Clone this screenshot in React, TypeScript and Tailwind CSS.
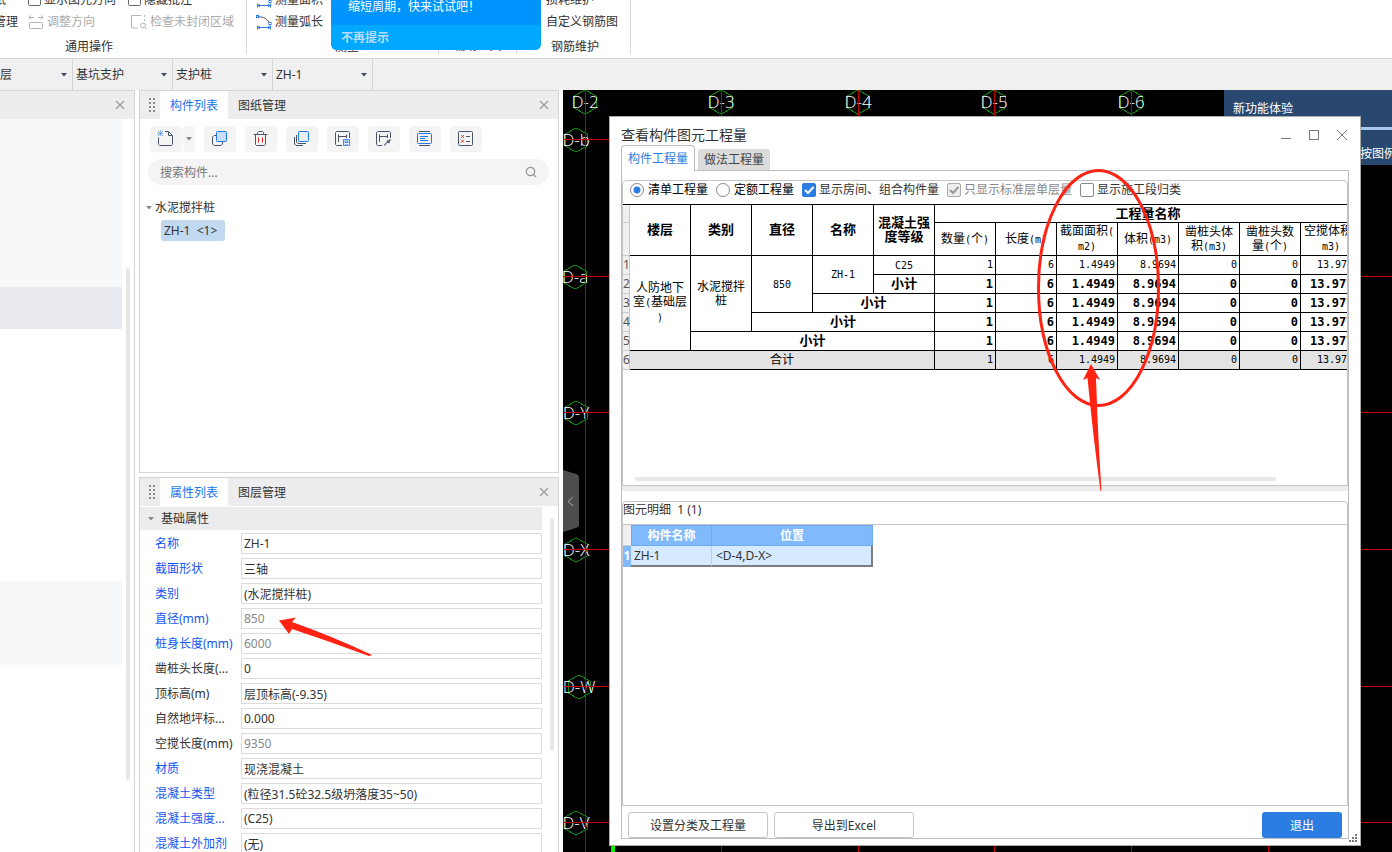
import React from "react";

const NAMES = "font-['Noto_Sans','Noto_Sans_CJK_SC',sans-serif]";

/* ---------- small shared pieces ---------- */

function CloseIcon({ className = "" }: { className?: string }) {
  return (
    <svg className={className} width="10" height="10" viewBox="0 0 10 10" fill="none" stroke="currentColor" strokeWidth="1.2">
      <path d="M1 1l8 8M9 1l-8 8" />
    </svg>
  );
}

function Caret({ className = "" }: { className?: string }) {
  return (
    <svg className={className} width="6" height="4" viewBox="0 0 6 4">
      <path d="M0 0h6L3 3.500z" fill="currentColor" />
    </svg>
  );
}

function Grip() {
  return (
    <svg width="7" height="15" viewBox="0 0 7 15" fill="#8a8a8a">
      {[0, 4, 8, 12].map((y) => (
        <g key={y}>
          <rect x="0" y={y} width="2" height="2" />
          <rect x="4" y={y} width="2" height="2" />
        </g>
      ))}
    </svg>
  );
}

function PanelHeader({ active, other }: { active: string; other: string }) {
  return (
    <div className="flex h-7 shrink-0 items-stretch bg-[#ededf0]">
      <span className="flex w-5 items-center justify-center pl-1">
        <Grip />
      </span>
      <button type="button" className="w-17 bg-white pt-px text-[#1a73e8]">{active}</button>
      <button type="button" className="w-17 pt-px">{other}</button>
      <button type="button" aria-label="关闭" className="mr-2 ml-auto flex w-3 items-center justify-center text-[#999]">
        <CloseIcon />
      </button>
    </div>
  );
}

/* ---------- ribbon ---------- */

function RibbonIcon({ kind }: { kind: "box" | "adjust" | "region" | "area" | "arc" }) {
  if (kind === "box")
    return (
      <svg width="13" height="16" viewBox="0 0 13 16" fill="none" stroke="#666">
        <rect x="0.500" y="3.500" width="12" height="10" rx="1" />
      </svg>
    );
  if (kind === "adjust")
    return (
      <svg width="16" height="16" viewBox="0 0 16 16" fill="none" stroke="#b4b4b4">
        <path d="M1 3.5h5M3 1.5l-2 2 2 2M10 3.5h5M13 1.5l2 2-2 2" />
        <rect x="1.5" y="8.5" width="13" height="6" rx="1" />
      </svg>
    );
  if (kind === "region")
    return (
      <svg width="16" height="16" viewBox="0 0 16 16" fill="none" stroke="#b4b4b4">
        <path d="M10 1.5H0.500v12.500h6" />
        <path d="M13.500 1v2M13.500 5v2" />
        <circle cx="12" cy="11.500" r="2.500" />
        <path d="M14 13.500l2 2" />
      </svg>
    );
  return (
    <svg width="16" height="16" viewBox="0 0 16 16" fill="none" stroke="#2f7be0">
      {kind === "arc" ? <path d="M2 3c6-1 10 3 12 7" stroke="#555" /> : <path d="M2 2h12v8" stroke="#555" />}
      <rect x="0.500" y="1.500" width="2" height="2" fill="#fff" />
      <rect x="13" y="8.500" width="2" height="2" fill="#fff" />
      <path d="M1 13.500h14M1.500 11.500v4M14.500 11.500v4M4 12l-2 1.500 2 1.500M12 12l2 1.500-2 1.500" />
    </svg>
  );
}

function RibbonItem({ icon, label, muted }: { icon?: "box" | "adjust" | "region" | "area" | "arc"; label: string; muted?: boolean }) {
  return (
    <button type="button" disabled={muted} className="flex h-[22px] items-center gap-[3px] whitespace-nowrap disabled:text-[#aaa]">
      {icon && <RibbonIcon kind={icon} />}
      {label}
    </button>
  );
}

function Ribbon() {
  return (
    <div className="relative flex h-[58px] shrink-0 items-end overflow-hidden bg-white">
      <div className="flex w-[246px] shrink-0 flex-col">
        <div className="flex">
          <div className="flex w-7 shrink-0 flex-col items-end pr-[10px]">
            <div className="pr-3">
              <RibbonItem label="图纸" />
            </div>
            <RibbonItem label="管理" />
          </div>
          <div className="w-[100px] shrink-0">
            <RibbonItem icon="box" label="显示图元方向" />
            <RibbonItem icon="adjust" label="调整方向" muted />
          </div>
          <div>
            <RibbonItem icon="box" label="隐藏批注" />
            <div className="pl-[3px]">
              <RibbonItem icon="region" label="检查未封闭区域" muted />
            </div>
          </div>
        </div>
        <div className="flex h-[25px] items-center pt-[2px] pl-[65px]">通用操作</div>
      </div>
      <div className="mb-1 flex w-[192px] shrink-0 flex-col border-l border-[#d8d8d8] pl-[9px]">
        <RibbonItem icon="area" label="测量面积" />
        <RibbonItem icon="arc" label="测量弧长" />
        <div className="flex h-[21px] items-center justify-center pt-[6px]">测量</div>
      </div>
      <div className="mb-1 flex h-[65px] w-[79px] shrink-0 items-end justify-center border-x border-[#d8d8d8]">辅助工具</div>
      <div className="mb-1 flex w-[114px] shrink-0 flex-col border-r border-[#d8d8d8] pl-[29px]">
        <RibbonItem label="损耗维护" />
        <RibbonItem label="自定义钢筋图" />
        <div className="flex h-[21px] items-center pt-[6px] pl-[5px]">钢筋维护</div>
      </div>
      <div className="absolute top-0 left-[331px] flex h-[50px] w-[210px] flex-col overflow-hidden rounded-b-md bg-[#0094ff] text-white">
        <p className="h-[25px] pl-[17px] text-[12px] leading-[14px]">缩短周期，快来试试吧！</p>
        <button type="button" className="flex-1 bg-[#00a8ff] pl-[10px] text-left font-bold text-[#b5dcff]">不再提示</button>
      </div>
    </div>
  );
}

function SelectorBar() {
  const items = ["基坑支护", "支护桩", "ZH-1"];
  return (
    <div className="flex h-8 shrink-0 items-stretch border-t border-[#d4d4d4] bg-[#f0f0f0]">
      <button type="button" className="flex w-[73px] items-center justify-between border-r border-[#d4d4d4] pr-[5px]">
        层<Caret className="text-[#444b60]" />
      </button>
      {items.map((t) => (
        <button key={t} type="button" className="flex w-[100px] items-center justify-between border-r border-[#d4d4d4] pr-[5px] pl-[3px]">
          {t}
          <Caret className="text-[#444b60]" />
        </button>
      ))}
    </div>
  );
}

/* ---------- left column ---------- */

function SidePanel() {
  return (
    <div className="flex w-[135px] shrink-0 flex-col border-t border-r border-[#d4d4d4] bg-white">
      <div className="flex h-7 items-center justify-end bg-[#ededf0] pr-[9px]">
        <button type="button" aria-label="关闭" className="text-[#999]">
          <CloseIcon />
        </button>
      </div>
      <div className="flex flex-1">
        <div className="w-[122px]">
          <div className="h-[168px] bg-[#f7f8fa]" />
          <div className="h-[42px] bg-[#e8eaef]" />
          <div className="h-[252px]" />
          <div className="h-[84px] bg-[#f7f8fa]" />
        </div>
        <div className="mt-[149px] ml-1 h-[512px] w-1 rounded-full bg-[#e6e6e6]" />
      </div>
    </div>
  );
}

/* ---------- component list ---------- */

const TOOL_ICONS: { name: string; art: React.ReactNode }[] = [
  {
    name: "复制",
    art: (
      <>
        <path d="M5 5.500H3L1.500 7v7L3 15.500h7l1.500-1.500v-2" stroke="#4a5468" />
        <rect x="5.500" y="1.500" width="10" height="10" rx="1" fill="#c9dcf7" stroke="#2176e5" />
      </>
    ),
  },
  {
    name: "删除",
    art: (
      <>
        <path d="M1.500 4.500h14M3.500 4.500v10l1 1h8l1-1v-10M5.500 4.500v-2l1-1h4l1 1v2" stroke="#4a5468" />
        <path d="M6.500 7.500v5M10.500 7.500v5" stroke="#e02020" />
      </>
    ),
  },
  {
    name: "层间复制",
    art: (
      <>
        <path d="M3.500 5v7l1.500 1.500h8M1.500 7v7L3 15.500h7" stroke="#4a5468" />
        <rect x="5.500" y="1.500" width="10" height="10" rx="1" fill="#e6f0fe" stroke="#2176e5" />
      </>
    ),
  },
  {
    name: "存档",
    art: (
      <>
        <path d="M8 15.500H2.500l-1-1v-12l1-1h12l1 1V8M4.500 12V4.500M4.500 6.500h8M12.500 4.500V8" stroke="#4a5468" />
        <path d="M9.500 9.500h6v6h-6z" fill="#dcebff" stroke="#4b8be6" />
        <path d="M11 11h3v1.500h-3zM11 15h3" stroke="#4b8be6" fill="#fff" />
      </>
    ),
  },
  {
    name: "提取",
    art: (
      <>
        <path d="M7 15.500H2.500l-1-1v-12l1-1h12l1 1V8M4.500 12V4.500M4.500 6.500h8M12.500 4.500V8" stroke="#4a5468" />
        <path d="M9 15.500l4-4" stroke="#7b8394" strokeWidth="1.500" />
        <path d="M12 10.500l2.500 2.500M13.500 11.500l2-2" stroke="#4a5468" strokeWidth="1.500" />
      </>
    ),
  },
  {
    name: "列表",
    art: (
      <>
        <path d="M3 1.500h11M3 15.500h11" stroke="#4a5468" />
        <rect x="1.500" y="3.500" width="14" height="10" rx="1" stroke="#2176e5" />
        <path d="M4 6.500h8M4 8.500h5M4 10.500h8" stroke="#2176e5" />
      </>
    ),
  },
  {
    name: "批量选择",
    art: (
      <>
        <rect x="1.500" y="1.500" width="14" height="14" rx="1" stroke="#4a5468" />
        <path d="M4 5l3 3M7 5L4 8M4 9.500l3 3M7 9.500l-3 3" stroke="#e04040" />
        <path d="M9 6.500h4M9 11.500h4" stroke="#4a5468" />
      </>
    ),
  },
];

function ToolIcon({ children }: { children: React.ReactNode }) {
  return (
    <svg className="overflow-visible" width="16" height="16" viewBox="1 1 16 16" fill="none">
      {children}
    </svg>
  );
}

function ComponentList() {
  return (
    <section className="flex h-[383px] shrink-0 flex-col border border-[#d4d4d4] bg-white">
      <PanelHeader active="构件列表" other="图纸管理" />
      <div className="flex gap-[9px] px-[10px] pt-[7px]">
        <div className="flex gap-px">
          <button type="button" aria-label="新建" className="flex h-[26px] w-8 items-center justify-center rounded-sm bg-[#f4f4f4]">
            <ToolIcon>
              <path d="M1.500 7.500v7l1 1h12l1-1v-9l-4-4H8" stroke="#4a5468" />
              <path d="M11.500 2v3.500H15" stroke="#4a5468" />
              <path d="M1 1l5 5M6 1L1 6M3.500 0.500v6M0.500 3.500h6" stroke="#2f7be0" strokeDasharray="1 1" />
            </ToolIcon>
          </button>
          <button type="button" aria-label="更多新建选项" className="flex h-[26px] w-3 items-center justify-center rounded-sm bg-[#f4f4f4] text-[#888]">
            <Caret />
          </button>
        </div>
        {TOOL_ICONS.map((t) => (
          <button key={t.name} type="button" aria-label={t.name} className="flex h-[26px] w-8 items-center justify-center rounded-sm bg-[#f4f4f4]">
            <ToolIcon>{t.art}</ToolIcon>
          </button>
        ))}
      </div>
      <label className="mr-[9px] ml-2 mt-[7px] flex h-[26px] items-center rounded-full bg-[#f4f4f4] pr-3 pl-3">
        <input aria-label="搜索构件" placeholder="搜索构件..." className="min-w-0 flex-1 bg-transparent pt-px outline-none placeholder:text-[#777]" />
        <svg width="12" height="12" viewBox="0 0 12 12" fill="none" stroke="#999" strokeWidth="1.200">
          <circle cx="5.500" cy="5.500" r="4.200" />
          <path d="M8.500 8.500l2.500 2.500" />
        </svg>
      </label>
      <div className="mt-[13px] ml-[6px] flex h-5 items-center gap-[3px]">
        <Caret className="text-[#888]" />
        水泥搅拌桩
      </div>
      <button type="button" className="mt-[2px] ml-[21px] h-[21px] w-16 self-start rounded-[3px] bg-[#c1d8f1] px-[3px] text-left">
        ZH-1&nbsp; &lt;1&gt;
      </button>
    </section>
  );
}

/* ---------- properties ---------- */

const PROPS: { label: string; value: string; blue?: boolean; muted?: boolean }[] = [
  { label: "名称", value: "ZH-1", blue: true },
  { label: "截面形状", value: "三轴", blue: true },
  { label: "类别", value: "(水泥搅拌桩)", blue: true },
  { label: "直径(mm)", value: "850", blue: true, muted: true },
  { label: "桩身长度(mm)", value: "6000", blue: true, muted: true },
  { label: "凿桩头长度(...", value: "0" },
  { label: "顶标高(m)", value: "层顶标高(-9.35)" },
  { label: "自然地坪标...", value: "0.000" },
  { label: "空搅长度(mm)", value: "9350", muted: true },
  { label: "材质", value: "现浇混凝土", blue: true },
  { label: "混凝土类型", value: "(粒径31.5砼32.5级坍落度35~50)", blue: true },
  { label: "混凝土强度...", value: "(C25)", blue: true },
  { label: "混凝土外加剂", value: "(无)", blue: true },
];

function PropertyList() {
  return (
    <section className="mt-1 flex min-h-0 flex-1 flex-col overflow-hidden border border-b-0 border-[#d4d4d4] bg-white">
      <PanelHeader active="属性列表" other="图层管理" />
      <div className="flex min-h-0 flex-1">
        <div className="flex-1 pt-px">
          <div className="flex h-[23px] items-center gap-[7px] bg-[#ececec] pl-2">
            <Caret className="text-[#888]" />
            基础属性
          </div>
          <div className="flex flex-col gap-1 pt-[3px]">
            {PROPS.map((p, i) => (
              <div key={p.label} className="flex h-[21px] items-center pl-[15px]">
                <label htmlFor={`prop-${i}`} className={`w-[86px] shrink-0 whitespace-nowrap ${p.blue ? "text-[#1456f0]" : ""}`}>
                  {p.label}
                </label>
                <input
                  id={`prop-${i}`}
                  defaultValue={p.value}
                  className={`h-[21px] min-w-0 flex-1 border border-[#dcdcdc] px-[2px] outline-none ${p.muted ? "text-[#888]" : ""}`}
                />
              </div>
            ))}
          </div>
        </div>
        <div className="mt-3 mr-1 ml-2 h-[233px] w-1 rounded-full bg-[#e8e8e8]" />
      </div>
    </section>
  );
}

/* ---------- drawing canvas ---------- */

const V_AXES = [
  { x: 22, t: "D-2" },
  { x: 158, t: "D-3" },
  { x: 295, t: "D-4" },
  { x: 431, t: "D-5" },
  { x: 568, t: "D-6" },
  { x: 705, t: "" },
];
const H_AXES = [
  { x: 13, y: 49, t: "D-b" },
  { x: 12, y: 186, t: "D-a" },
  { x: 13, y: 322, t: "D-Y" },
  { x: 13, y: 459, t: "D-X" },
  { x: 16, y: 596, t: "D-W" },
  { x: 13, y: 732, t: "D-V" },
];

function AxisMark({ x, y, t }: { x: number; y: number; t: string }) {
  return (
    <g>
      <path d={`M${x} ${y - 12}l11 6v12l-11 6-11-6v-12z`} fill="none" stroke="#0a8a0a" />
      <text x={x} y={y + 6} textAnchor="middle" fill="#fff" fontSize="17">
        {t}
      </text>
    </g>
  );
}

function Drawing() {
  return (
    <svg className="absolute inset-0 h-full w-full font-['Open_Sans','Noto_Sans',sans-serif] font-light" shapeRendering="crispEdges">
      {V_AXES.filter((a) => a.t).map((a) => (
        <AxisMark key={a.t} x={a.x} y={12} t={a.t} />
      ))}
      {H_AXES.map((a) => (
        <AxisMark key={a.t} x={a.x} y={a.y + 1} t={a.t} />
      ))}
      {V_AXES.map((a) => (
        <line key={a.x} x1={a.x + 0.5} x2={a.x + 0.5} y1="0" y2="100%" stroke="#c80000" />
      ))}
      {H_AXES.map((a) => (
        <line key={a.y} x1="0" x2="100%" y1={a.y + 0.5} y2={a.y + 0.5} stroke="#c80000" />
      ))}
      <rect x="48" y="740" width="4" height="40" fill="#00f000" />
    </svg>
  );
}

/* ---------- quantity table ---------- */

/* Latin runs are set in a narrower monospace size than the Chinese glyphs. */
function Mixed({ text }: { text: string }) {
  return (
    <>
      {text.split(/([ -~]+)/).map((part, i) =>
        /^[ -~]+$/.test(part) ? (
          <span key={i} className="text-[10px]">{part}</span>
        ) : (
          part
        ),
      )}
    </>
  );
}

const CELL = "overflow-hidden border-r border-b border-black p-0 whitespace-pre";
const GUTTER = "border-r border-b border-[#c8c8c8] bg-[#f0f0f0] p-0 font-normal";
const HEAD = `${CELL} text-center text-[13px] leading-[14px] font-bold`;
const SUB = `${CELL} text-center leading-[14px] font-normal`;
const MID = `${CELL} text-center leading-[14px]`;
const VALUES = ["1", "6", "1.4949", "8.9694", "0", "0"];
const QTY_HEADS = ["数量(个)", "长度(m)", "截面面积(\nm2)", "体积(m3)", "凿桩头体\n积(m3)", "凿桩头数\n量(个)", "空搅体积(\nm3)"];

function Values({ bold }: { bold?: boolean }) {
  return (
    <>
      {VALUES.map((v, i) => (
        <td key={i} className={`${CELL} pr-[2px] text-right ${bold ? "text-[12px] font-bold" : "text-[10px]"}`}>
          {v}
        </td>
      ))}
      <td className={`${CELL} text-left ${bold ? "pl-[9px] text-[12px] font-bold" : "pl-4 text-[10px]"}`}>13.9777</td>
    </>
  );
}

function RowNo({ n }: { n: number }) {
  return (
    <th scope="row" className={`${GUTTER} ${NAMES} text-[12px] text-[#555]`}>
      {n}
    </th>
  );
}

function QuantityTable() {
  return (
    <table className="w-[739px] table-fixed border-separate border-spacing-0 border-t border-black font-['DejaVu_Sans_Mono','Noto_Sans_CJK_SC',monospace] text-[12px] leading-[14px] text-black">
      <colgroup>
        <col className="w-[7px]" />
        {Array.from({ length: 12 }, (_, i) => (
          <col key={i} className="w-[61px]" />
        ))}
      </colgroup>
      <thead>
        <tr className="h-[18px]">
          <td className={GUTTER} />
          <th rowSpan={2} className={HEAD}>楼层</th>
          <th rowSpan={2} className={HEAD}>类别</th>
          <th rowSpan={2} className={HEAD}>直径</th>
          <th rowSpan={2} className={HEAD}>名称</th>
          <th rowSpan={2} className={HEAD}>{"混凝土强\n度等级"}</th>
          <th colSpan={7} className={HEAD}>工程量名称</th>
        </tr>
        <tr className="h-[33px]">
          <td className={GUTTER} />
          {QTY_HEADS.map((h) => (
            <th key={h} className={SUB}>
              <Mixed text={h} />
            </th>
          ))}
        </tr>
      </thead>
      <tbody>
        <tr className="h-[19px]">
          <RowNo n={1} />
          <td rowSpan={5} className={MID}><Mixed text={"人防地下\n室(基础层\n)"} /></td>
          <td rowSpan={4} className={MID}>{"水泥搅拌\n桩"}</td>
          <td rowSpan={3} className={MID}><Mixed text="850" /></td>
          <td rowSpan={2} className={MID}><Mixed text="ZH-1" /></td>
          <td className={MID}><Mixed text="C25" /></td>
          <Values />
        </tr>
        {[1, 2, 3, 4].map((span) => (
          <tr key={span} className="h-[19px]">
            <RowNo n={span + 1} />
            <td colSpan={span} className={HEAD}>小计</td>
            <Values bold />
          </tr>
        ))}
        <tr className="h-[19px] bg-[#e3e3e3]">
          <RowNo n={6} />
          <td colSpan={5} className={MID}>合计</td>
          <Values />
        </tr>
      </tbody>
    </table>
  );
}

function CheckBox({ label, checked, disabled }: { label: string; checked?: boolean; disabled?: boolean }) {
  return (
    <label className={`flex items-center gap-[3px] whitespace-nowrap ${disabled ? "text-[#888]" : ""}`}>
      <span className="relative flex size-[14px]">
        <input
          type="checkbox"
          defaultChecked={checked}
          disabled={disabled}
          className="peer size-[14px] appearance-none rounded-[2px] border border-[#888] bg-white checked:border-[#2b7de1] checked:bg-[#2b7de1] disabled:border-[#aaa] disabled:bg-[#eee]"
        />
        <svg
          className="pointer-events-none absolute inset-0 hidden text-white peer-checked:block peer-disabled:text-[#999]"
          width="14" height="14" viewBox="0 0 14 14" fill="none" stroke="currentColor" strokeWidth="2"
        >
          <path d="M3 7l3 3 5.500-6" />
        </svg>
      </span>
      {label}
    </label>
  );
}

function Radio({ label, checked }: { label: string; checked?: boolean }) {
  return (
    <label className="flex items-center gap-1 whitespace-nowrap text-black">
      <input
        type="radio"
        name="quantity-kind"
        defaultChecked={checked}
        className="size-[14px] appearance-none rounded-full border border-[#888] bg-white checked:bg-[radial-gradient(circle,#2b7de1_3px,#fff_4px)]"
      />
      {label}
    </label>
  );
}

function QuantityDialog() {
  return (
    <div role="dialog" aria-label="查看构件图元工程量" className="absolute top-[26px] right-[31px] bottom-[6px] left-[46px] flex flex-col border border-[#aaa] bg-white px-[11px] pb-[6px]">
      <div className="flex h-7 shrink-0 items-center justify-between pt-2">
        <h1 className="text-[14px] leading-5">查看构件图元工程量</h1>
        <div className="-mr-[7px] flex text-[#777]">
          <button type="button" aria-label="最小化" className="flex h-5 w-7 items-center justify-center">
            <svg width="10" height="10" viewBox="0 0 10 10" stroke="currentColor"><path d="M0 8.500h10" /></svg>
          </button>
          <button type="button" aria-label="最大化" className="flex h-5 w-7 items-center justify-center">
            <svg width="10" height="10" viewBox="0 0 10 10" fill="none" stroke="currentColor"><rect x="0.500" y="0.500" width="9" height="9" /></svg>
          </button>
          <button type="button" aria-label="关闭" className="flex h-5 w-7 items-center justify-center">
            <svg width="12" height="12" viewBox="0 0 12 12" stroke="currentColor"><path d="M1 1l10 10M11 1L1 11" /></svg>
          </button>
        </div>
      </div>
      <div className="flex h-[25px] shrink-0 items-end gap-[3px]">
        <button type="button" className="z-10 -mb-px h-[26px] w-[74px] rounded-t-sm border border-b-0 border-[#bcbcc4] bg-white text-[#2b7de1]">
          构件工程量
        </button>
        <button type="button" className="h-[21px] w-[72px] rounded-t-[3px] bg-[#dcdcdc] text-[#444]">做法工程量</button>
      </div>
      <div className="flex min-h-0 flex-1 flex-col border border-[#bcbcc4] pt-[9px]">
        <div className="flex min-h-0 flex-1 flex-col rounded-t-sm border border-[#c4c4c4]">
          <div className="flex h-[23px] shrink-0 items-center gap-2 pb-[6px] pl-[7px]">
            <Radio label="清单工程量" checked />
            <Radio label="定额工程量" />
            <CheckBox label="显示房间、组合构件量" checked />
            <CheckBox label="只显示标准层单层量" checked disabled />
            <CheckBox label="显示施工段归类" />
          </div>
          <div className="min-h-0 flex-1 overflow-hidden">
            <QuantityTable />
          </div>
          <div className="mr-[71px] mb-1 ml-3 h-1 shrink-0 rounded-full bg-[#e8e8e8]" />
        </div>
        <div className="h-[5px] shrink-0 bg-[#ececec]" />
        <div className="mt-[10px] flex min-h-0 flex-1 flex-col rounded-t-sm border border-[#c4c4c4]">
          <p className="flex h-[23px] shrink-0 items-center border-b border-[#c4c4c4] pb-[5px] whitespace-pre">图元明细  1 (1)</p>
          <div className="flex-1 overflow-hidden">
            <table className="w-[250px] table-fixed border-separate border-spacing-0">
              <colgroup>
                <col className="w-2" />
                <col className="w-[81px]" />
                <col className="w-[161px]" />
              </colgroup>
              <thead>
                <tr className="h-[21px] text-white">
                  <td className="border-b border-[#ccc] bg-[#f0f0f0] p-0" />
                  <th className="border border-[#6aabf2] bg-[#80bafc] p-0 pt-px font-bold">构件名称</th>
                  <th className="border border-l-0 border-[#6aabf2] bg-[#80bafc] p-0 pt-px font-bold">位置</th>
                </tr>
              </thead>
              <tbody>
                <tr className="h-[21px]">
                  <th scope="row" className="bg-[#80bafc] p-0 font-bold text-white">1</th>
                  <td className="border-r border-b-2 border-r-[#ccc] border-b-[#7d7d7d] bg-[#d5e9ff] p-0 pt-[2px] pl-[3px]">ZH-1</td>
                  <td className="border-r-2 border-b-2 border-[#7d7d7d] bg-[#d5e9ff] p-0 pt-[2px] pl-1">&lt;D-4,D-X&gt;</td>
                </tr>
              </tbody>
            </table>
          </div>
        </div>
        <div className="flex shrink-0 gap-[6px] px-[6px] pt-[6px]">
          <button type="button" className="h-[26px] w-[140px] rounded-[3px] border border-[#c4c4c4] bg-white pt-px">设置分类及工程量</button>
          <button type="button" className="h-[26px] w-[140px] rounded-[3px] border border-[#c4c4c4] bg-white pt-px">导出到Excel</button>
          <button type="button" className="ml-auto h-[26px] w-20 rounded-[3px] bg-[#2b7de1] pt-px text-white">退出</button>
        </div>
      </div>
      <svg className="absolute right-[3px] bottom-[3px]" width="8" height="8" viewBox="0 0 8 8" fill="#777">
        <path d="M6 0h2v2H6zM3 3h2v2H3zM6 3h2v2H6zM0 6h2v2H0zM3 6h2v2H3zM6 6h2v2H6z" />
      </svg>
    </div>
  );
}

/* ---------- page ---------- */

export default function App() {
  return (
    <div className={`relative flex h-screen flex-col overflow-hidden bg-white text-[12px] leading-4 text-[#333] ${NAMES}`}>
      <Ribbon />
      <SelectorBar />
      <main className="flex min-h-0 flex-1 gap-1">
        <SidePanel />
        <div className="flex w-[420px] shrink-0 flex-col">
          <ComponentList />
          <PropertyList />
        </div>
        <div className="relative min-w-0 flex-1 overflow-hidden bg-black">
          <Drawing />
          <button type="button" aria-label="收起面板" className="absolute top-[380px] left-0 h-[62px] w-4">
            <svg width="16" height="62" viewBox="0 0 16 62" fill="none">
              <path d="M0 0l13 4q3 1 3 3v48q0 2-3 3L0 62z" fill="#4d4d4d" />
              <path d="M10 27l-5 4.500 5 4.500" stroke="#aaa" />
            </svg>
          </button>
          <aside className="absolute top-0 right-0 flex w-[168px] flex-col bg-[#29486f] text-white">
            <p className="flex h-[37px] items-center pl-[9px]">新功能体验</p>
            <div className="h-[3px] bg-[#a6c8ee]" />
            <p className="flex h-[35px] items-center justify-end pt-3 whitespace-nowrap">
              <span className="-mr-1">按图例</span>
            </p>
          </aside>
          <QuantityDialog />
        </div>
      </main>
      <svg className="pointer-events-none absolute inset-0 h-full w-full" fill="#ff2314">
        <ellipse cx="1098.500" cy="288" rx="60" ry="117.500" fill="none" stroke="#ff2314" strokeWidth="3" />
        <path d="M1091 364l9 16-4-2q2 60 5.500 113-1 0-1 0-8-60-13-113l-4.500 2z" />
        <path d="M279 620.500l17-3-4 4.500q40 14 80 33-2 1-3 1-38-14-77-27l-3 5z" />
      </svg>
    </div>
  );
}
